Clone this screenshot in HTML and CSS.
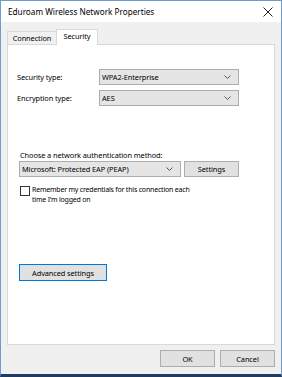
FILE: index.html
```html
<!DOCTYPE html>
<html>
<head>
<meta charset="utf-8">
<link rel="stylesheet" href="styles.css">
</head>
<body>
<div class="window">
  <div class="titlebar">
    <span class="title">Eduroam Wireless Network Properties</span>
    <svg class="close" width="10" height="10" viewBox="0 0 10 10"><path d="M0.5 0.5 L9.5 9.5 M9.5 0.5 L0.5 9.5" stroke="#222" stroke-width="1" fill="none"/></svg>
  </div>
  <div class="content">
    <div class="tabs">
      <div class="tab">Connection</div>
      <div class="tab active">Security</div>
    </div>
    <div class="panel">
      <div class="grid">
        <span class="label">Security type:</span>
        <div class="select wide"><span>WPA2-Enterprise</span><svg class="chev" width="7" height="4" viewBox="0 0 7 4"><path d="M0.5 0.5 L3.5 3.5 L6.5 0.5" stroke="#555" fill="none"/></svg></div>
        <span class="label">Encryption type:</span>
        <div class="select wide"><span>AES</span><svg class="chev" width="7" height="4" viewBox="0 0 7 4"><path d="M0.5 0.5 L3.5 3.5 L6.5 0.5" stroke="#555" fill="none"/></svg></div>
      </div>
      <div class="auth">
        <div class="auth-label">Choose a network authentication method:</div>
        <div class="auth-row">
          <div class="select method"><span>Microsoft: Protected EAP (PEAP)</span><svg class="chev" width="7" height="4" viewBox="0 0 7 4"><path d="M0.5 0.5 L3.5 3.5 L6.5 0.5" stroke="#555" fill="none"/></svg></div>
          <div class="btn settings">Settings</div>
        </div>
        <div class="check-row">
          <span class="checkbox"></span>
          <span class="check-text">Remember my credentials for this connection each<br>time I'm logged on</span>
        </div>
      </div>
      <div class="btn advanced">Advanced settings</div>
    </div>
    <div class="footer">
      <div class="btn footbtn">OK</div>
      <div class="btn footbtn">Cancel</div>
    </div>
  </div>
</div>
</body>
</html>
```
FILE: styles.css
```css
html, body {
  margin: 0;
  padding: 0;
}
body {
  font-family: "Noto Sans", "Open Sans", sans-serif;
  font-size: 7.4px;
  letter-spacing: -0.1px;
  color: #000;
  width: 282px;
  height: 377px;
  overflow: hidden;
}
.window {
  box-sizing: border-box;
  width: 282px;
  height: 377px;
  border: 1px solid #6f9ccc;
  border-bottom: 3px solid #1d3b63;
  display: flex;
  flex-direction: column;
  background: #f0f0f0;
}
.titlebar {
  height: 21px;
  background: #fff;
  display: flex;
  align-items: center;
  justify-content: space-between;
  padding: 0 8px 0 7px;
}
.title {
  font-size: 8.2px;
  letter-spacing: 0;
  color: #000;
}
.close {
  display: block;
  margin-top: 1px;
}
.content {
  flex: 1;
  display: flex;
  flex-direction: column;
  padding: 7px 6px 0 6px;
}
.tabs {
  display: flex;
  align-items: flex-end;
  height: 15px;
}
.tab {
  box-sizing: border-box;
  height: 13px;
  line-height: 12px;
  width: 49px;
  border: 1px solid #d9d9d9;
  border-bottom: none;
  border-right: none;
  background: #f0f0f0;
  text-align: center;
}
.tab.active {
  height: 16px;
  width: 42px;
  margin-bottom: -1px;
  background: #fff;
  border-right: 1px solid #d9d9d9;
  line-height: 13px;
  position: relative;
  z-index: 1;
}
.panel {
  box-sizing: border-box;
  height: 301px;
  background: #fff;
  border: 1px solid #d9d9d9;
  padding: 24px 0 0 9px;
  display: flex;
  flex-direction: column;
  align-items: flex-start;
}
.grid {
  display: grid;
  grid-template-columns: 82px 140px;
  row-gap: 5px;
  align-items: center;
}
.label {
  line-height: 16px;
}
.select {
  box-sizing: border-box;
  height: 16px;
  background: #e5e5e5;
  border: 1px solid #adadad;
  display: flex;
  align-items: center;
  justify-content: space-between;
  padding: 0 7px 0 2px;
}
.chev {
  display: block;
}
.auth {
  margin-top: 44px;
  padding-left: 2px;
  display: flex;
  flex-direction: column;
  align-items: flex-start;
}
.auth-label {
  line-height: 10px;
  margin-left: 1px;
}
.auth-row {
  display: flex;
  gap: 3px;
  margin-top: 1px;
}
.method {
  width: 162px;
}
.btn {
  box-sizing: border-box;
  height: 16px;
  background: #e1e1e1;
  border: 1px solid #adadad;
  display: flex;
  align-items: center;
  justify-content: center;
}
.settings {
  width: 55px;
}
.check-row {
  display: flex;
  justify-content: flex-start;
  gap: 2px;
  margin-top: 8px;
  margin-left: 1px;
}
.checkbox {
  display: block;
  box-sizing: border-box;
  width: 10px;
  height: 10px;
  border: 1px solid #333;
  background: #fff;
  margin-top: 1px;
  flex: none;
}
.check-text {
  display: block;
  font-size: 7px;
  letter-spacing: -0.2px;
  line-height: 10px;
}
.advanced {
  width: 88px;
  height: 17px;
  margin-top: 59px;
  margin-left: 2px;
  border: 1px solid #0078d7;
  background: #e1e1e1;
}
.footer {
  display: flex;
  justify-content: flex-end;
  gap: 5px;
  padding-top: 5px;
}
.footbtn {
  width: 55px;
  height: 17px;
}
```
